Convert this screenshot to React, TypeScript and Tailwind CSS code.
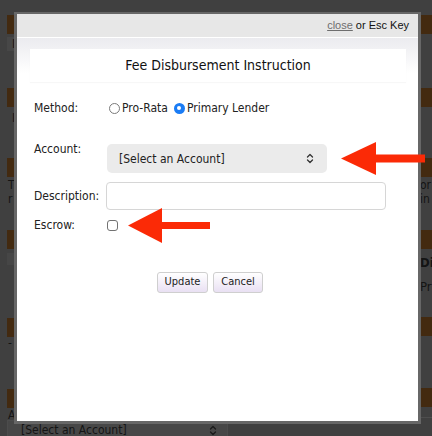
import React from 'react';

const ui = { fontFamily: '"DejaVu Sans Condensed", "DejaVu Sans", sans-serif' };
const helv = { fontFamily: '"Liberation Sans", Arial, sans-serif' };

// Dimmed page that sits behind the dialog
function PageBar() {
  return <div className="h-[19px] bg-[#432a10]" />;
}

function PageBehind() {
  return (
    <div className="flex gap-2 px-[7px] pt-[15px] text-[12px] text-[#141414]" style={ui}>
      <div className="flex w-[404px] shrink-0 flex-col">
        <PageBar />
        <div className="mt-[3px] h-[14px] w-[200px] bg-[#474747] pl-[5px] leading-[14px]">I</div>
        <div className="h-[37px]" />
        <PageBar />
        <div className="h-[51px] pl-[5px] pt-[4px] leading-[14px]">I</div>
        <PageBar />
        <div className="h-[53px] pl-[1px] pt-[1px] leading-[14px]">
          <div>T</div>
          <div>r</div>
        </div>
        <PageBar />
        <div className="mt-[4px] h-[12px] w-[200px] bg-[#464646]" />
        <div className="h-[53px]" />
        <PageBar />
        <div className="h-[52px] pl-[1px] leading-[12px]">-</div>
        <PageBar />
        <div className="h-[12px] pl-[1px] leading-[14px]">A</div>
        <div className="flex h-[20px] w-[221px] items-center justify-between border border-[#4c4c4c] bg-[#474747] pl-[13px] pr-[10px]">
          <span>[Select an Account]</span>
          <Chevrons color="#1a1a1a" />
        </div>
      </div>
      <div className="flex flex-1 flex-col">
        <PageBar />
        <div className="h-[54px]" />
        <PageBar />
        <div className="h-[51px]" />
        <PageBar />
        <div className="h-[53px] pl-[1px] pt-[1px] leading-[14px]">
          <div>or</div>
          <div>in</div>
        </div>
        <PageBar />
        <div className="h-[68px] pl-[1px] pt-[2px] text-[13px] leading-[24px]">
          <div className="font-bold">Di</div>
          <div>Pr</div>
        </div>
        <PageBar />
        <div className="h-[52px]" />
        <PageBar />
        <div className="mt-[10px] border-t border-[#4e4e4e]" />
      </div>
    </div>
  );
}

function Chevrons({ color }: { color: string }) {
  return (
    <svg width="8" height="11" viewBox="0 0 8 11" fill="none" stroke={color} strokeWidth="1.3" strokeLinecap="round" strokeLinejoin="round">
      <path d="M1.5 4 L4 1.5 L6.5 4" />
      <path d="M1.5 7 L4 9.5 L6.5 7" />
    </svg>
  );
}

function Radio({ checked }: { checked?: boolean }) {
  if (checked) {
    return (
      <span className="flex h-[11px] w-[11px] items-center justify-center rounded-full bg-[#1a7cf5]">
        <span className="h-[4px] w-[4px] rounded-full bg-white" />
      </span>
    );
  }
  return <span className="h-[11px] w-[11px] rounded-full border border-[#7a7a7a] bg-white" />;
}

function RedArrow({ width, head, headH, shaft }: { width: number; head: number; headH: number; shaft: number }) {
  const mid = headH / 2;
  return (
    <svg width={width} height={headH} viewBox={`0 0 ${width} ${headH}`}>
      <polygon points={`0,${mid} ${head},0 ${head},${headH}`} fill="#fb2a06" />
      <rect x={head - 1} y={mid - shaft / 2} width={width - head + 1} height={shaft} fill="#fb2a06" />
    </svg>
  );
}

function FormButton({ label, w }: { label: string; w: string }) {
  return (
    <button
      className={`h-[21px] ${w} rounded-[3px] border border-[#cfcfcf] bg-gradient-to-b from-white to-[#e9e0f3] text-[11px] text-[#222]`}
      style={ui}
    >
      {label}
    </button>
  );
}

export default function App() {
  return (
    <div className="relative h-[436px] w-[432px] overflow-hidden bg-[#404040]">
      <PageBehind />

      {/* dialog */}
      <div className="absolute left-[14px] top-[12px] h-[412px] w-[407px] border-[3px] border-t-2 border-[#676767] bg-white">
        <div className="flex h-[24px] items-center justify-end border-b border-white bg-[#e7e7e7] pr-[9px] text-[11px]" style={helv}>
          <span className="text-[#6e6e6e] underline">close</span>
          <span className="ml-[3px] text-[#111]">or Esc Key</span>
        </div>

        <div className="bg-gradient-to-b from-[#ebebef] to-white to-[80%] px-[13px] pr-[12px] pt-[11px]">
          <div
            className="flex h-[33px] items-center justify-center bg-white text-[14px] text-[#111] shadow-[0_1px_1px_rgba(0,0,0,0.03)]"
            style={ui}
          >
            Fee Disbursement Instruction
          </div>
        </div>

        <div className="pl-[17px] text-[12px] text-[#222]" style={ui}>
          <div className="mt-[18px] flex h-[16px] items-center">
            <span className="w-[75px]">Method:</span>
            <Radio />
            <span className="ml-[2px] mr-[6px]">Pro-Rata</span>
            <Radio checked />
            <span className="ml-[2px]">Primary Lender</span>
          </div>

          <div className="mt-[25px] flex items-start">
            <span className="w-[73px] leading-[16px]">Account:</span>
            <div className="relative mt-[3px] flex items-start">
              <div className="flex h-[29px] w-[220px] items-center justify-between rounded-[5px] bg-[#ebebeb] pl-[12px] pr-[13px] text-[12px] text-[#222]">
                <span>[Select an Account]</span>
                <Chevrons color="#333" />
              </div>
              {/* callout arrow */}
              <div className="absolute left-[234px] top-[-2px]">
                <RedArrow width={84} head={35} headH={33} shaft={8} />
              </div>
            </div>
          </div>

          <div className="mt-[9px] flex items-center">
            <span className="w-[72px]">Description:</span>
            <div className="h-[28px] w-[280px] rounded-[4px] border border-[#d6d6d6] bg-white" />
          </div>

          <div className="mt-[7px] flex h-[16px] items-center">
            <span className="w-[73px]">Escrow:</span>
            <span className="relative h-[11px] w-[11px] rounded-[3px] border border-[#727272] bg-white">
              <span className="absolute left-[20px] top-[-13px]">
                <RedArrow width={82} head={34} headH={35} shaft={7} />
              </span>
            </span>
          </div>
        </div>

        <div className="mt-[39px] flex gap-[5px] pl-[140px]">
          <FormButton label="Update" w="w-[51px]" />
          <FormButton label="Cancel" w="w-[50px]" />
        </div>
      </div>
    </div>
  );
}
